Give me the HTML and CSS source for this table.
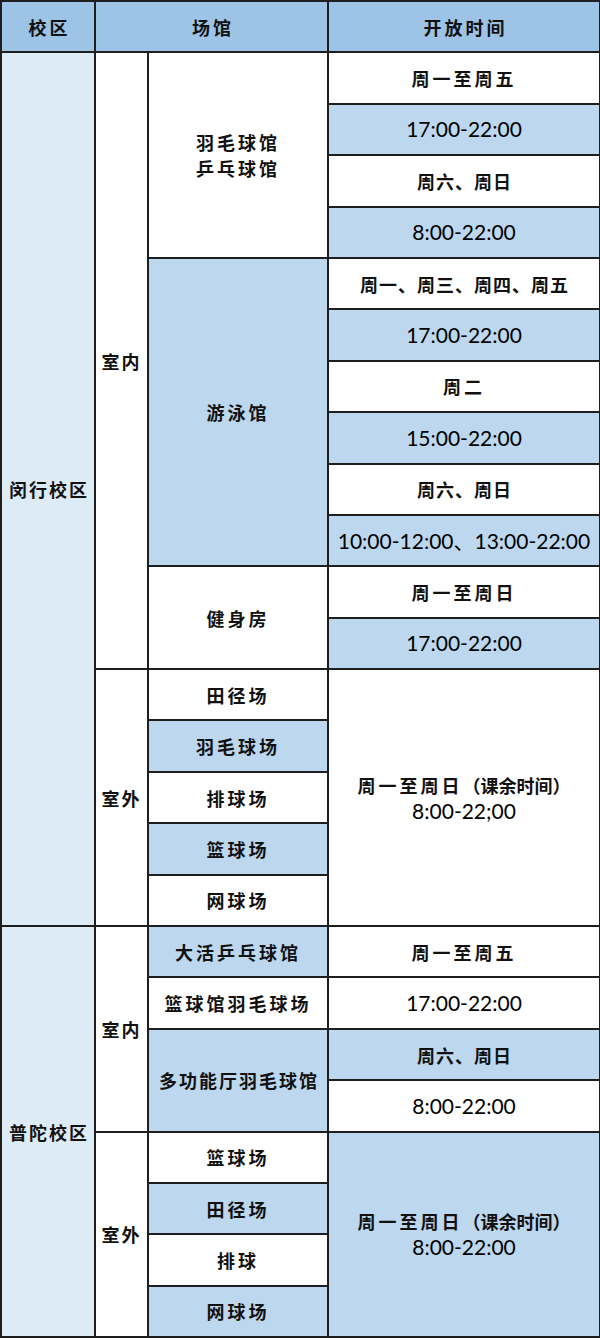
FILE: index.html
```html
<!DOCTYPE html>
<html lang="zh-CN">
<head>
<meta charset="utf-8">
<title>场馆开放时间</title>
<link rel="stylesheet" href="styles.css">
</head>
<body>
<table class="schedule">
  <colgroup>
    <col class="c-campus">
    <col class="c-type">
    <col class="c-venue">
    <col class="c-time">
  </colgroup>
  <thead>
    <tr>
      <th class="cn">校区</th>
      <th class="cn" colspan="2">场馆</th>
      <th class="cn">开放时间</th>
    </tr>
  </thead>
  <tbody>
    <tr>
      <td class="cn campus" rowspan="17">闵行校区</td>
      <td class="cn type" rowspan="12">室内</td>
      <td class="cn" rowspan="4">羽毛球馆<br>乒乓球馆</td>
      <td class="cn">周一至周五</td>
    </tr>
    <tr><td class="num blue">17:00-22:00</td></tr>
    <tr><td class="cn tight">周六、周日</td></tr>
    <tr><td class="num blue">8:00-22:00</td></tr>
    <tr>
      <td class="cn blue" rowspan="6">游泳馆</td>
      <td class="cn tight">周一、周三、周四、周五</td>
    </tr>
    <tr><td class="num blue">17:00-22:00</td></tr>
    <tr><td class="cn">周二</td></tr>
    <tr><td class="num blue">15:00-22:00</td></tr>
    <tr><td class="cn tight">周六、周日</td></tr>
    <tr><td class="num blue">10:00-12:00、13:00-22:00</td></tr>
    <tr>
      <td class="cn" rowspan="2">健身房</td>
      <td class="cn">周一至周日</td>
    </tr>
    <tr><td class="num blue">17:00-22:00</td></tr>
    <tr>
      <td class="cn type" rowspan="5">室外</td>
      <td class="cn">田径场</td>
      <td class="cn" rowspan="5">周一至周日<span class="paren">（课余时间）</span><br><span class="num">8:00-22;00</span></td>
    </tr>
    <tr><td class="cn blue">羽毛球场</td></tr>
    <tr><td class="cn">排球场</td></tr>
    <tr><td class="cn blue">篮球场</td></tr>
    <tr><td class="cn">网球场</td></tr>
    <tr>
      <td class="cn campus" rowspan="8">普陀校区</td>
      <td class="cn type" rowspan="4">室内</td>
      <td class="cn blue">大活乒乓球馆</td>
      <td class="cn">周一至周五</td>
    </tr>
    <tr>
      <td class="cn">篮球馆羽毛球场</td>
      <td class="num">17:00-22:00</td>
    </tr>
    <tr>
      <td class="cn blue long" rowspan="2">多功能厅羽毛球馆</td>
      <td class="cn blue tight">周六、周日</td>
    </tr>
    <tr><td class="num">8:00-22:00</td></tr>
    <tr>
      <td class="cn type" rowspan="4">室外</td>
      <td class="cn">篮球场</td>
      <td class="cn blue" rowspan="4">周一至周日<span class="paren">（课余时间）</span><br><span class="num">8:00-22:00</span></td>
    </tr>
    <tr><td class="cn blue">田径场</td></tr>
    <tr><td class="cn">排球</td></tr>
    <tr><td class="cn blue">网球场</td></tr>
  </tbody>
</table>
</body>
</html>
```

FILE: styles.css
```css
html, body {
  margin: 0;
  padding: 0;
  background: #ffffff;
}

.schedule {
  width: 599px;
  border-collapse: collapse;
  table-layout: fixed;
  color: #111111;
  font-family: "Noto Sans CJK SC", sans-serif;
}

.c-campus { width: 94px; }
.c-type { width: 53px; }
.c-venue { width: 180px; }
.c-time { width: 272px; }

.schedule tr {
  height: 51.4px;
}

.schedule th,
.schedule td {
  border: 2px solid #1e1e1e;
  padding: 0;
  text-align: center;
  vertical-align: middle;
  white-space: nowrap;
  background: #ffffff;
  line-height: 26px;
}

.schedule th {
  background: #9dc3e6;
  font-weight: 700;
  font-size: 18px;
  letter-spacing: 3px;
  padding-left: 3px;
}

.cn {
  font-family: "Noto Sans CJK SC", sans-serif;
  font-weight: 700;
  font-size: 18px;
  letter-spacing: 3px;
  padding-left: 3px;
}

.schedule td.tight {
  letter-spacing: 1px;
  padding-left: 1px;
}

.schedule td.long {
  letter-spacing: 2px;
  padding-left: 2px;
}

.num {
  font-family: Lato, "Noto Sans CJK SC", sans-serif;
  font-weight: 400;
  font-size: 21px;
  letter-spacing: 0;
  color: #000000;
}

td.num {
  padding-left: 0;
}

.paren {
  letter-spacing: 0;
}

.schedule td.blue {
  background: #bdd7ee;
}

.schedule td.campus {
  background: #ddebf7;
  letter-spacing: 2px;
  padding-left: 2px;
}

.schedule td.type {
  letter-spacing: 2px;
}
```
